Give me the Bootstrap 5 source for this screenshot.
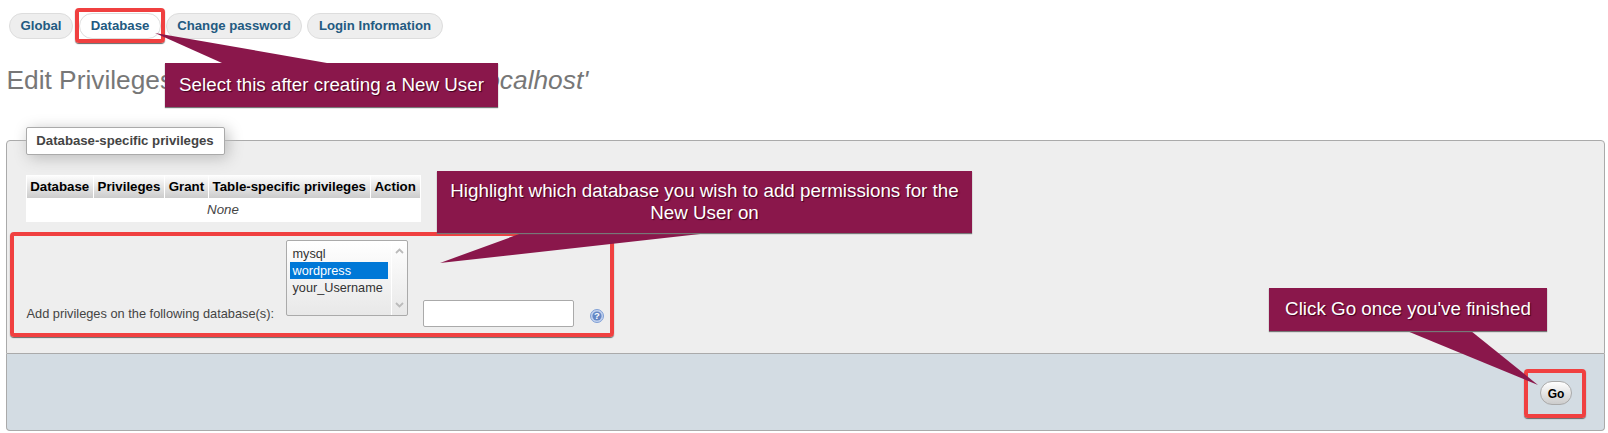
<!DOCTYPE html>
<html lang="en">
<head>
<meta charset="utf-8">
<title>Edit Privileges</title>
<link href="https://cdn.jsdelivr.net/npm/bootstrap@5.3.0/dist/css/bootstrap.min.css" rel="stylesheet">
<style>
html,body{height:433px;overflow:hidden}
body{background:#fff;font-family:"Liberation Sans",Arial,sans-serif;font-size:12px;color:#444;position:relative}
.page-wrap{padding:13px 3px 0 5.5px}
.tab-row{list-style:none;margin:0 0 0 3.5px;padding:0;height:26px;display:flex;gap:0}
.tab-pill{height:26px;border:1px solid #ddd;border-radius:13px;background:#eee;color:#235a81;font-weight:700;font-size:13.2px;display:flex;align-items:center;justify-content:center;text-decoration:none}
.tp-global{width:64px;margin-right:6px}
.tp-db{width:82px;background:#fff;margin-right:5px}
.tp-pass{width:136px;margin-right:5px}
.tp-login{width:136px}
.page-title{font-size:26.3px;font-weight:400;color:#777;margin:27px 0 0 1px;line-height:28px;white-space:nowrap}
.priv-box{margin-top:46px;height:214px;background:#eee;border:1px solid #aaa;border-radius:4px 4px 0 0;position:relative;padding:34px 19px 0}
.legend-box{position:absolute;left:19px;top:-14px;width:199px;height:28px;background:#fff;border:1px solid #aaa;border-radius:2px;box-shadow:3px 3px 15px #bbb;font-weight:700;font-size:13.2px;color:#444;display:flex;align-items:center;justify-content:center}
.priv-table{width:395px;border-collapse:separate;border-spacing:1px 0;background:#fff;font-size:13.3px}
.priv-table th{background:linear-gradient(#fff,#ccc);color:#000;font-weight:700;height:23px;padding:0 3.5px;text-align:center;white-space:nowrap}
.priv-table td{height:24px;text-align:center;font-style:italic;color:#444;padding:0}
.add-row{margin-top:7px;display:flex;align-items:flex-end;height:87px}
.add-label{font-size:12.8px;color:#444;width:259px;line-height:15px;margin-bottom:-5px;flex:none;padding-left:1px}
.db-list{width:122px;height:76px;background:linear-gradient(#fff,#e8e8e8);border:1px solid #aaa;border-radius:2px;padding:3px;display:flex;flex:none;margin-left:1px}
.db-items{width:98px;flex:none;font-size:12.7px;color:#333;line-height:18px;margin-top:1px}
.db-opt{padding-left:3px;height:17px}
.db-sel{background:#0078d7;color:#fff}
.db-scroll{width:17px;flex:none;margin:-3px -3px -3px 3px;border-left:1px solid #fff;display:flex;flex-direction:column;justify-content:space-between;align-items:center;padding:7px 0}
.db-input{width:151px;height:27px;margin-left:15px;background:#fff;border:1px solid #aaa;border-radius:2px;margin-bottom:-11px;flex:none}
.help-ico{margin-left:16px;margin-bottom:-7px;width:14px;height:14px;flex:none}
.foot-bar{height:77px;background:#d3dce3;border:1px solid #aaa;border-top:0;border-radius:0 0 4px 4px;display:flex;justify-content:flex-end;align-items:flex-start;padding:27px 32px 0 0}
.go-btn{width:32px;height:24px;border:1px solid #aaa;border-radius:12px;background:linear-gradient(#fff,#ccc);font-family:"Liberation Sans",Arial,sans-serif;font-weight:700;font-size:12px;color:#000;padding:1px 0 0;line-height:20px}
.red-mark{position:absolute;border:4px solid #f04040;border-radius:4px;box-shadow:0 1px 1px #666;pointer-events:none}
.rm-tab{left:75px;top:8px;width:90px;height:35px}
.rm-add{left:10px;top:232px;width:604px;height:105px}
.rm-go{left:1524px;top:369px;width:62px;height:49px}
.callout{position:absolute;background:#8a174b;color:#fff;font-size:18.8px;line-height:22px;text-align:center;box-shadow:0 1px 1px #777;text-shadow:1px 1px 1px #40001e}
.co-1{left:165px;top:63px;width:333px;height:44px;padding-top:11px}
.co-2{left:437px;top:171px;width:535px;height:62px;padding-top:9px}
.co-3{left:1269px;top:288px;width:278px;height:43px;padding-top:10px}
.tail{position:absolute;left:0;top:0;width:1608px;height:433px;pointer-events:none}
</style>
</head>
<body>
<div class="page-wrap">
  <ul class="tab-row">
    <li><a class="tab-pill tp-global" href="#">Global</a></li>
    <li><a class="tab-pill tp-db" href="#">Database</a></li>
    <li><a class="tab-pill tp-pass" href="#">Change password</a></li>
    <li><a class="tab-pill tp-login" href="#">Login Information</a></li>
  </ul>
  <h2 class="page-title">Edit Privileges: User <i>'your_Username'@'localhost'</i></h2>
  <div class="priv-box">
    <div class="legend-box">Database-specific privileges</div>
    <table class="priv-table">
      <thead><tr><th>Database</th><th>Privileges</th><th>Grant</th><th>Table-specific privileges</th><th>Action</th></tr></thead>
      <tbody><tr><td colspan="5">None</td></tr></tbody>
    </table>
    <div class="add-row">
      <div class="add-label">Add privileges on the following database(s):</div>
      <div class="db-list">
        <div class="db-items">
          <div class="db-opt">mysql</div>
          <div class="db-opt db-sel">wordpress</div>
          <div class="db-opt">your_Username</div>
        </div>
        <div class="db-scroll">
          <svg width="9" height="6" viewBox="0 0 9 6"><path d="M1 5 4.5 1.5 8 5" fill="none" stroke="#bbb" stroke-width="1.8"/></svg>
          <svg width="9" height="6" viewBox="0 0 9 6"><path d="M1 1 4.5 4.5 8 1" fill="none" stroke="#bbb" stroke-width="1.8"/></svg>
        </div>
      </div>
      <div class="db-input"></div>
      <svg class="help-ico" viewBox="0 0 14 14"><circle cx="7" cy="7" r="6.5" fill="#c3d2ee" stroke="#7f9fd6"/><circle cx="7" cy="7" r="4.6" fill="#6486c4"/><text x="7" y="10.4" font-size="9.5" font-weight="700" text-anchor="middle" fill="#fff" font-family="Liberation Sans">?</text></svg>
    </div>
  </div>
  <div class="foot-bar"><button class="go-btn" type="button">Go</button></div>
</div>

<div class="red-mark rm-tab"></div>
<div class="red-mark rm-add"></div>
<div class="red-mark rm-go"></div>

<svg class="tail" viewBox="0 0 1608 433">
  <polygon points="155,33 222,63 327,63" fill="#8a174b"/>
  <polygon points="522,233 709,233 440,263" fill="#8a174b"/>
  <polygon points="1407,331 1471,331 1538,385" fill="#8a174b"/>
</svg>
<div class="callout co-1">Select this after creating a New User</div>
<div class="callout co-2">Highlight which database you wish to add permissions for the<br>New User on</div>
<div class="callout co-3">Click Go once you've finished</div>
<script src="https://cdn.jsdelivr.net/npm/bootstrap@5.3.0/dist/js/bootstrap.bundle.min.js"></script>
</body>
</html>
